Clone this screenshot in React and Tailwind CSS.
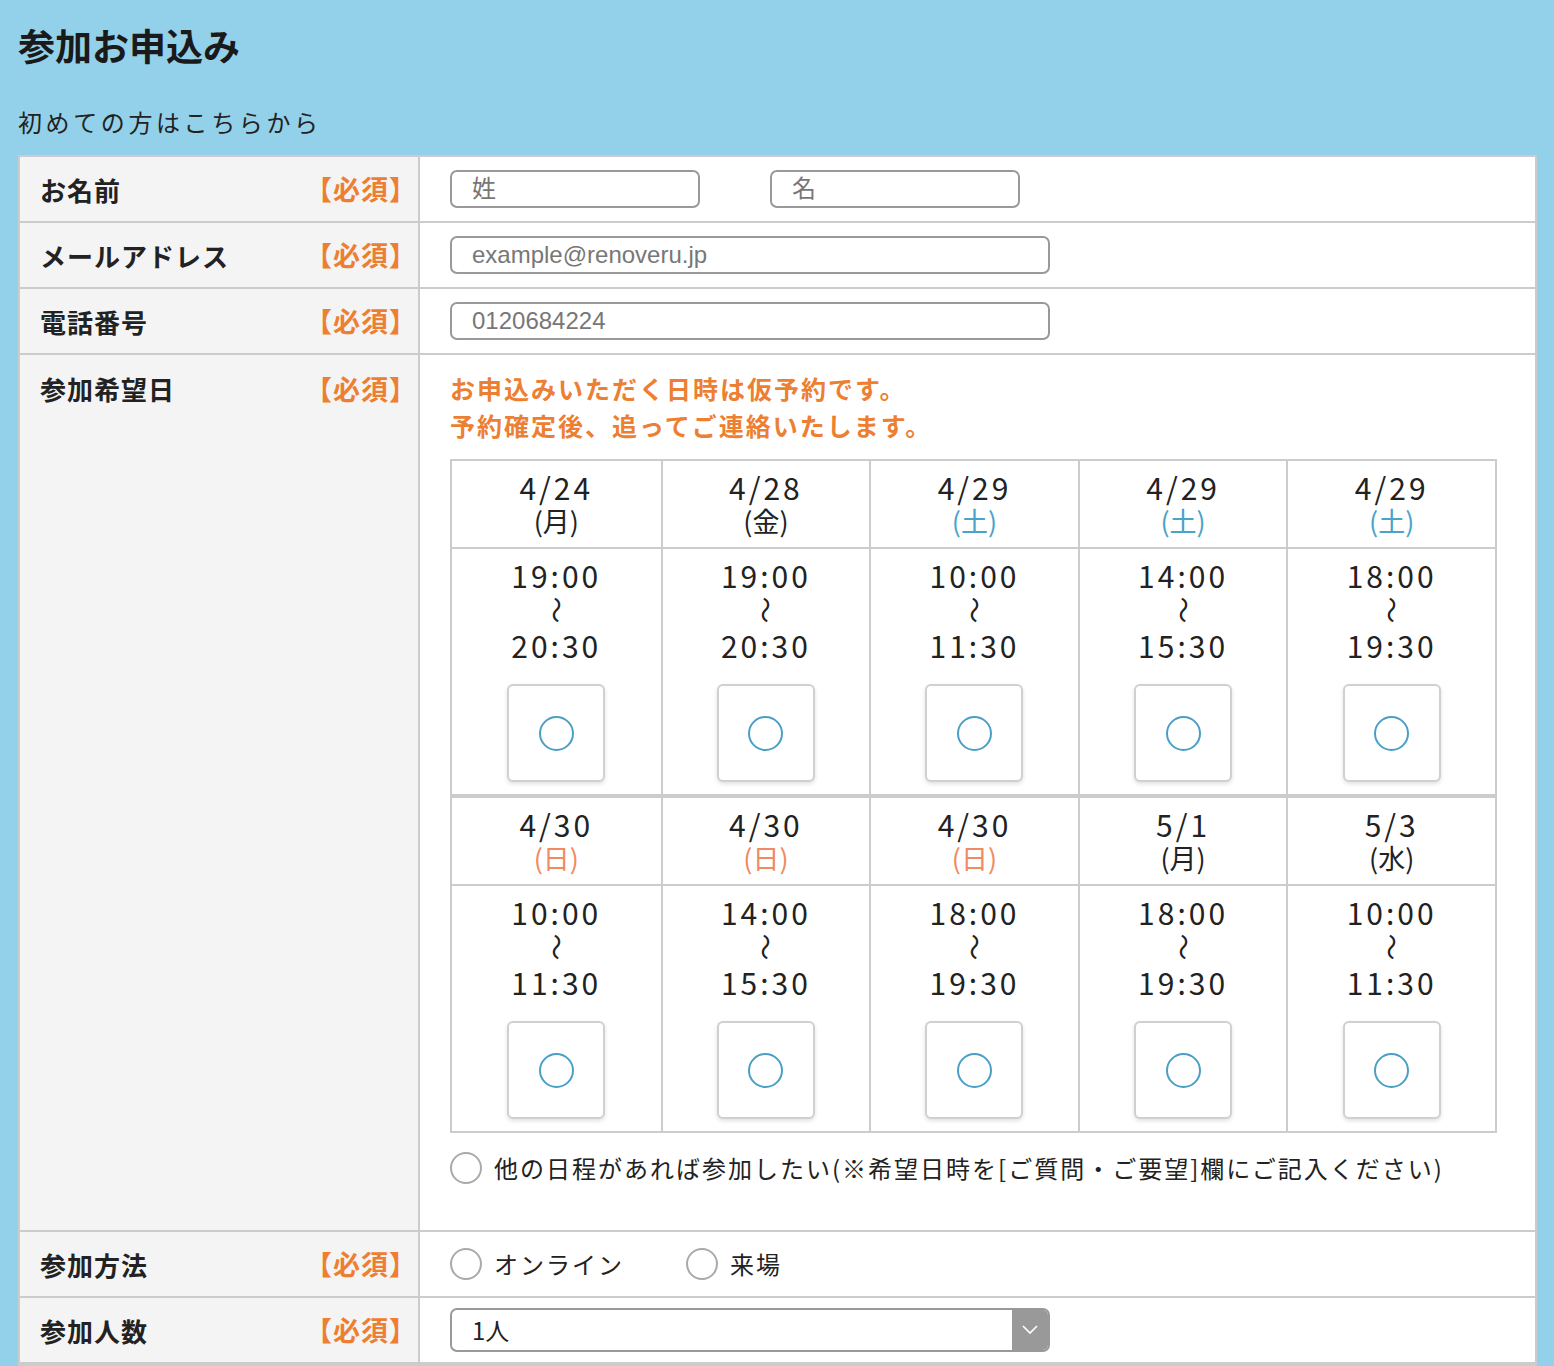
import React from 'react';

const FONT = { fontFamily: '"Noto Sans CJK JP", "Noto Sans", sans-serif' };
const LATIN = { fontFamily: '"Liberation Sans", "Noto Sans CJK JP", sans-serif' };

const ROW1 = [
  { date: '4/24', day: '月', from: '19:00', to: '20:30' },
  { date: '4/28', day: '金', from: '19:00', to: '20:30' },
  { date: '4/29', day: '土', from: '10:00', to: '11:30' },
  { date: '4/29', day: '土', from: '14:00', to: '15:30' },
  { date: '4/29', day: '土', from: '18:00', to: '19:30' },
];
const ROW2 = [
  { date: '4/30', day: '日', from: '10:00', to: '11:30' },
  { date: '4/30', day: '日', from: '14:00', to: '15:30' },
  { date: '4/30', day: '日', from: '18:00', to: '19:30' },
  { date: '5/1', day: '月', from: '18:00', to: '19:30' },
  { date: '5/3', day: '水', from: '10:00', to: '11:30' },
];

function dayColor(day) {
  if (day === '土') return 'text-[#4aa3c9]';
  if (day === '日') return 'text-[#ef8a62]';
  return 'text-[#222]';
}

function Label({ children, top }) {
  return (
    <div className={`w-[400px] shrink-0 bg-[#f4f4f4] border-r-2 border-[#cccccc] flex justify-between pl-[20px] pr-[1px] ${top ? 'items-start pt-[14px]' : 'items-center'}`}>
      <span className="text-[26px] font-bold text-[#222] tracking-[1px]">{children}</span>
      <span className="text-[27px] font-bold text-[#ed7f33] tracking-[1px]">【必須】</span>
    </div>
  );
}

function Input({ value, w }) {
  return (
    <div style={LATIN} className={`${w} h-[38px] border-2 border-[#999] rounded-[7px] flex items-center pl-[20px] text-[24px] text-[#777]`}>
      {value}
    </div>
  );
}

function Radio({ label }) {
  return (
    <div className="flex items-center gap-[12px]">
      <span className="w-[32px] h-[32px] rounded-full border-2 border-[#aaa] bg-white" />
      <span className="text-[24px] text-[#222] tracking-[2px]">{label}</span>
    </div>
  );
}

function ScheduleRow({ items, first }) {
  return (
    <div className={`grid grid-cols-5 ${first ? '' : 'border-t-[4px] border-[#cccccc]'}`}>
      {items.map((it, i) => (
        <div key={i} className={`flex flex-col ${i > 0 ? 'border-l-2 border-[#cccccc]' : ''}`}>
          <div className="h-[88px] border-b-2 border-[#cccccc] flex flex-col items-center justify-center">
            <span className="text-[30px] text-[#222] tracking-[3px] leading-[33px]">{it.date}</span>
            <span className={`text-[27px] leading-[33px] ${dayColor(it.day)}`}>({it.day})</span>
          </div>
          <div className="flex flex-col items-center pt-[8px] pb-[12px]">
            <span className="text-[30px] text-[#222] tracking-[3px] leading-[36px]">{it.from}</span>
            <span className="text-[27px] text-[#222] leading-[34px] inline-block rotate-90">〜</span>
            <span className="text-[30px] text-[#222] tracking-[3px] leading-[36px]">{it.to}</span>
            <div className="mt-[21px] w-[98px] h-[98px] rounded-[6px] border-2 border-[#d0d0d0] bg-white shadow-[0_2px_4px_rgba(0,0,0,0.12)] flex items-center justify-center">
              <span className="w-[35px] h-[35px] rounded-full border-2 border-[#4a9fc6]" />
            </div>
          </div>
        </div>
      ))}
    </div>
  );
}

export default function App() {
  return (
    <div style={FONT} className="min-h-[1366px] bg-[#93d1ea] px-[18px] pt-[20px]">
      <h1 className="text-[37px] font-bold text-[#1a1a1a] leading-[50px]">参加お申込み</h1>
      <p className="mt-[36px] text-[24px] text-[#222] tracking-[3.6px] leading-[32px]">初めての方はこちらから</p>

      <div className="mt-[17px] bg-white border-2 border-[#cccccc] w-[1519px]">
        {/* name */}
        <div className="flex h-[66px] border-b-2 border-[#cccccc]">
          <Label>お名前</Label>
          <div className="flex items-center gap-[70px] pl-[30px]">
            <Input value="姓" w="w-[250px]" />
            <Input value="名" w="w-[250px]" />
          </div>
        </div>
        {/* mail */}
        <div className="flex h-[66px] border-b-2 border-[#cccccc]">
          <Label>メールアドレス</Label>
          <div className="flex items-center pl-[30px]">
            <Input value="example@renoveru.jp" w="w-[600px]" />
          </div>
        </div>
        {/* tel */}
        <div className="flex h-[66px] border-b-2 border-[#cccccc]">
          <Label>電話番号</Label>
          <div className="flex items-center pl-[30px]">
            <Input value="0120684224" w="w-[600px]" />
          </div>
        </div>
        {/* date */}
        <div className="flex border-b-2 border-[#cccccc]">
          <Label top>参加希望日</Label>
          <div className="flex-1 pl-[30px] pr-[38px] pt-[15px] pb-[44px]">
            <p className="text-[25px] font-bold text-[#ed7f33] leading-[37px] tracking-[2px]">
              お申込みいただく日時は仮予約です。<br />予約確定後、追ってご連絡いたします。
            </p>
            <div className="mt-[15px] border-2 border-[#cccccc]">
              <ScheduleRow items={ROW1} first />
              <ScheduleRow items={ROW2} />
            </div>
            <div className="mt-[17px]">
              <Radio label="他の日程があれば参加したい(※希望日時を[ご質問・ご要望]欄にご記入ください)" />
            </div>
          </div>
        </div>
        {/* method */}
        <div className="flex h-[66px] border-b-2 border-[#cccccc]">
          <Label>参加方法</Label>
          <div className="flex items-center gap-[62px] pl-[30px]">
            <Radio label="オンライン" />
            <Radio label="来場" />
          </div>
        </div>
        {/* count */}
        <div className="flex h-[66px] border-b-2 border-[#cccccc]">
          <Label>参加人数</Label>
          <div className="flex items-center pl-[30px]">
            <div className="w-[600px] h-[44px] border-2 border-[#999] rounded-[7px] flex overflow-hidden">
              <div className="flex-1 flex items-center pl-[20px] text-[24px] text-[#222]">1人</div>
              <div className="w-[36px] bg-[#999] flex items-center justify-center">
                <svg width="16" height="10" viewBox="0 0 16 10" fill="none">
                  <path d="M1 1l7 7 7-7" stroke="#fff" strokeWidth="1.6" />
                </svg>
              </div>
            </div>
          </div>
        </div>
      </div>
    </div>
  );
}
